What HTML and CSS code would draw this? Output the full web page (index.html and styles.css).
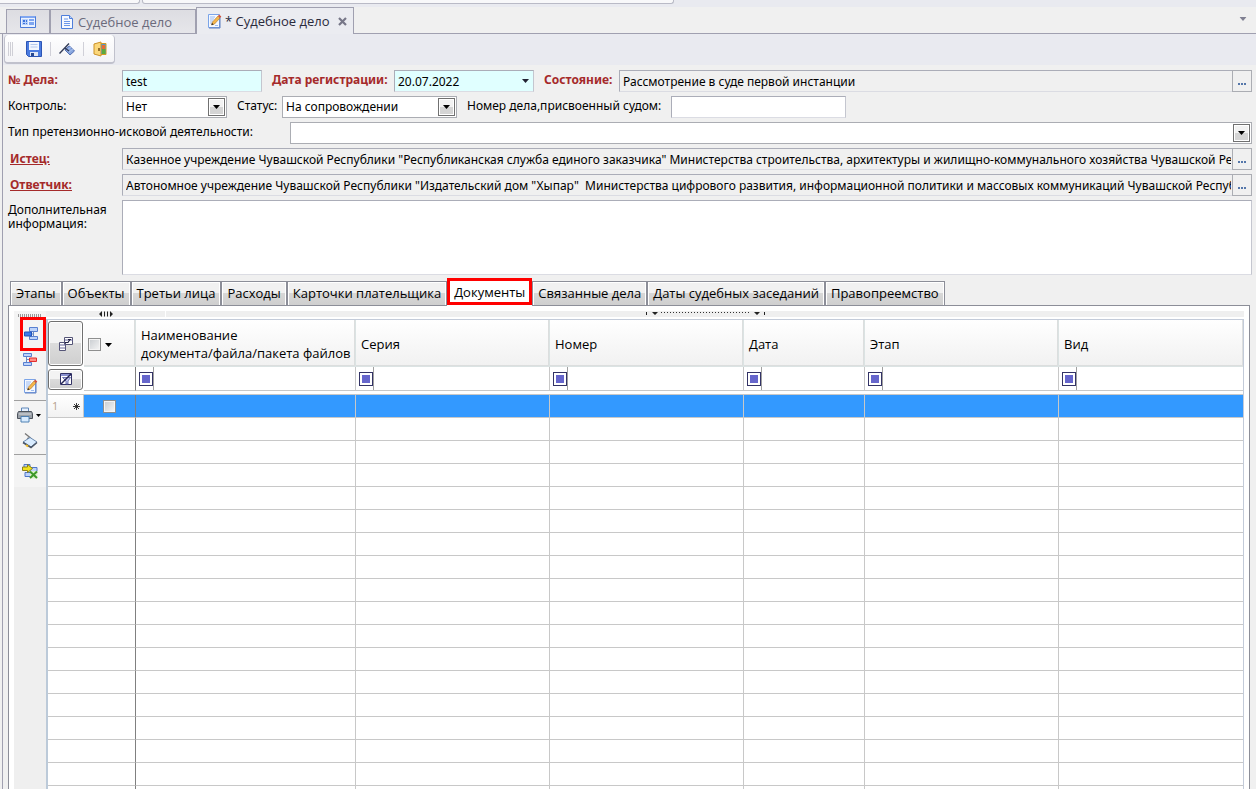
FILE: index.html
```html
<!DOCTYPE html>
<html lang="ru">
<head>
<meta charset="utf-8">
<title>Судебное дело</title>
<link rel="stylesheet" href="styles.css">
</head>
<body>
<svg class="defs" aria-hidden="true">
  <symbol id="dots" viewBox="0 0 8 2"><path d="M0 0h2v2H0zM3 0h2v2H3zM6 0h2v2H6z" fill="#5577aa"/></symbol>
  <symbol id="down" viewBox="0 0 7 4"><path d="M0 0h7L3.5 4z" fill="currentColor"/></symbol>
  <symbol id="edit" viewBox="0 0 16 16">
    <path d="M2.500 1.500h11v13h-11z" fill="#f4f8ff" stroke="#7ba4e8"/>
    <path d="M14 3v12H3" fill="none" stroke="#5f7fc0"/>
    <path d="M4 4h5M4 6h4M4 8h3M4 10h2M9 12.500h3" stroke="#9dbcf0"/>
    <path d="M5.500 12l1-3 5.500-6 2 2-5.500 6z" fill="#f6b64a" stroke="#a8742c" stroke-width=".6"/>
    <path d="M12 3l1-1.500 2.300 2L14 5z" fill="#d5543d"/><path d="M5.500 12l.5-2 1.700 1.400z" fill="#222"/>
  </symbol>
</svg>
<div class="app">
  <div class="topbars"><div class="topbar topbar-a"></div><div class="topbar topbar-b"></div></div>

  <div class="doctabs">
    <button class="doctab home" aria-label="Главная">
      <svg width="16" height="14" viewBox="0 0 16 14"><path d="M.5 1.500h15v11H.5z" fill="#eaf2ff" stroke="#4a7ad8"/><path d="M1 1h14v2H1z" fill="#7fa6f0"/><path d="M2 4h6v6H2z" fill="#b6d0fb"/><path d="M3 5h2v2H3zM6 5h1v2H6zM3 8h2v1H3zM6 8h1v1H6z" fill="#3d72da"/><path d="M9 4h5v2H9zM9 7h5v3H9z" fill="#7fa6f0"/></svg>
    </button>
    <button class="doctab second">
      <svg width="16" height="16" viewBox="0 0 16 16"><path d="M2.500 1.500h8l3 3v10h-11z" fill="#f6f9ff" stroke="#4f7fdb"/><path d="M10.500 1.500v3h3" fill="#bcd2fa" stroke="#4f7fdb"/><path d="M5 5h4M5 7.500h6M5 9.500h6M5 11.500h6" stroke="#6d98ea"/></svg>
      <span>Судебное дело</span>
    </button>
    <div class="doctab active">
      <svg width="16" height="16"><use href="#edit"/></svg>
      <span>* Судебное дело</span>
      <button class="close" aria-label="Закрыть"><svg width="9" height="9" viewBox="0 0 9 9"><path d="M1 1l7 7M8 1L1 8" stroke="#777788" stroke-width="2.200"/></svg></button>
    </div>
    <button class="tabmenu" aria-label="Список вкладок"><svg width="8" height="4" viewBox="0 0 7 4"><use href="#down"/></svg></button>
  </div>

  <main class="window">
    <div class="toolrow">
      <div class="toolbar">
        <i class="grip"></i>
        <button aria-label="Сохранить"><svg width="16" height="16" viewBox="0 0 16 16"><path d="M.5.5h15v15H2.500l-2-2z" fill="#4a7be0" stroke="#2c55b4"/><path d="M3 1h10v8H3z" fill="#f3f7ff"/><path d="M4.500 3.500h7M4.500 6h7" stroke="#b4c8ee"/><path d="M4 11h8v4H4z" fill="#dfe7f6"/><path d="M5 12h3v3H5z" fill="#27488f"/></svg></button>
        <i class="sep"></i>
        <button aria-label="Закрепить"><svg width="16" height="16" viewBox="0 0 16 16"><path d="M8 6.500l2.500-1.500 5 5-4.500 4-5-5z" fill="#86a5de" stroke="#4a67ab" stroke-width=".9"/><path d="M8 9l4-3M10 11l4-3" stroke="#b5caf2" stroke-width=".8"/><path d="M.5 12.500L10 2.500M6 7l4 3" stroke="#333c58" stroke-width="1.400"/></svg></button>
        <i class="sep"></i>
        <button aria-label="Выход"><svg width="16" height="16" viewBox="0 0 16 16"><path d="M6 2.500h8v11H6z" fill="#4a9bd0" stroke="#d69a22"/><path d="M10 8h3.500v5H10z" fill="#5bab3d"/><path d="M10 4h3v4h-3z" fill="#e76b35"/><path d="M2 3l7-2v14l-7-2z" fill="#fbd77a" stroke="#cb9127"/><path d="M7 7v3" stroke="#755015" stroke-width="1.500"/></svg></button>
      </div>
    </div>

    <form class="form" onsubmit="return false">
      <div class="row">
        <label class="req lab" for="num">№ Дела:</label>
        <input class="field cyan num" id="num" value="test">
        <label class="req date-lab" for="date">Дата регистрации:</label>
        <span class="combo date"><input class="field cyan" id="date" value="20.07.2022"><svg class="caret" width="7" height="4"><use href="#down"/></svg></span>
        <label class="req state-lab" for="state">Состояние:</label>
        <span class="lookup"><input class="field gray" id="state" readonly value="Рассмотрение в суде первой инстанции"><button class="more" aria-label="Выбрать состояние"><svg width="8" height="2"><use href="#dots"/></svg></button></span>
      </div>
      <div class="row">
        <label class="lab" for="ctl">Контроль:</label>
        <span class="combo ctl"><select class="field" id="ctl"><option>Нет</option></select><i class="drop"><svg width="7" height="4"><use href="#down"/></svg></i></span>
        <label class="status-lab" for="status">Статус:</label>
        <span class="combo status"><select class="field" id="status"><option>На сопровождении</option></select><i class="drop"><svg width="7" height="4"><use href="#down"/></svg></i></span>
        <label class="court-lab" for="court">Номер дела,присвоенный судом:</label>
        <input class="field court" id="court">
      </div>
      <div class="row">
        <label class="type-lab" for="type">Тип претензионно-исковой деятельности:</label>
        <span class="combo type"><select class="field" id="type"><option></option></select><i class="drop"><svg width="7" height="4"><use href="#down"/></svg></i></span>
      </div>
      <div class="row">
        <span class="lab link"><a class="req" href="#plaintiff">Истец:</a></span>
        <span class="lookup"><input class="field gray" id="plaintiff" aria-label="Истец" readonly value='Казенное учреждение Чувашской Республики "Республиканская служба единого заказчика" Министерства строительства, архитектуры и жилищно-коммунального хозяйства Чувашской Республики'><button class="more" aria-label="Выбрать истца"><svg width="8" height="2"><use href="#dots"/></svg></button></span>
      </div>
      <div class="row">
        <span class="lab link"><a class="req" href="#defendant">Ответчик:</a></span>
        <span class="lookup"><input class="field gray" id="defendant" aria-label="Ответчик" readonly value='Автономное учреждение Чувашской Республики "Издательский дом "Хыпар"  Министерства цифрового развития, информационной политики и массовых коммуникаций Чувашской Республики'><button class="more" aria-label="Выбрать ответчика"><svg width="8" height="2"><use href="#dots"/></svg></button></span>
      </div>
      <div class="row info">
        <label class="lab" for="info">Дополнительная информация:</label>
        <textarea class="field" id="info"></textarea>
      </div>
    </form>

    <div class="tabs">
      <button>Этапы</button><button>Объекты</button><button>Третьи лица</button><button>Расходы</button><button>Карточки плательщика</button><button class="current">Документы</button><button>Связанные дела</button><button>Даты судебных заседаний</button><button>Правопреемство</button>
    </div>

    <section class="panel">
      <div class="side">
        <i class="dotgrip"></i>
        <button class="marked" aria-label="Добавить"><svg width="16" height="16" viewBox="0 0 16 16"><path d="M6.500 1.500h8v4h-8zM6.500 10.500h8v3h-8z" fill="#bdd3fb" stroke="#587fd0"/><path d="M10.500 5.500v5M9 8h2" stroke="#6889c5"/><path d="M1.500 6h7v4h-7z" fill="#3b7bea" stroke="#2453b5"/></svg></button>
        <button aria-label="Удалить"><svg width="16" height="16" viewBox="0 0 16 16"><path d="M1.500 1.500h8v3h-8zM1.500 10.500h8v3h-8z" fill="#bdd3fb" stroke="#587fd0"/><path d="M4.500 5v5M4.500 7.500H8" stroke="#6889c5"/><path d="M7.500 6h7v3.500h-7z" fill="#ff8c86" stroke="#e12e2e"/></svg></button>
        <button aria-label="Изменить"><svg width="16" height="16"><use href="#edit"/></svg></button>
        <hr>
        <button class="print" aria-label="Печать"><svg width="16" height="16" viewBox="0 0 16 16"><path d="M4.500 1h7v5h-7z" fill="#e7f1ff" stroke="#5f87b8"/><path d="M1.500 4.500h13l1 2v5H.5v-5z" fill="#9aa0a7" stroke="#4e555e"/><path d="M2 7h12" stroke="#d9dde2"/><path d="M4 9.500h8v5.500H4z" fill="#d7ebff" stroke="#4e80b2"/></svg><svg class="mini" width="5" height="3" viewBox="0 0 7 4"><use href="#down"/></svg></button>
        <button aria-label="Просмотр"><svg width="16" height="16" viewBox="0 0 16 16"><path d="M3 .5l5 4-3 1" fill="none" stroke="#777" stroke-width="1.300"/><path d="M1 9l7-4.500L15 9l-6 5z" fill="#d9ecff" stroke="#6a88ae"/><path d="M1 9.500l8 5 6-5" fill="none" stroke="#4c5768" stroke-width="1.600"/><path d="M4 12l2 1.500" stroke="#f2bc28" stroke-width="2"/></svg></button>
        <hr>
        <button aria-label="Экспорт"><svg width="16" height="16" viewBox="0 0 16 16"><path d="M2 1.500h6v4H2zM3 9.500h6v4H3zM8 4.500h7v4H8z" fill="#bcd2fb" stroke="#4e76c8"/><path d="M.5 4h5V1.500l5 4-5 4V7.500h-5z" fill="#f1e21c" stroke="#82780e" stroke-width=".9"/><path d="M8 8h7.500v7.500H8z" fill="#dbf0cc"/><path d="M8 8.500l7 6.500M15 8.500l-7 6.500" stroke="#3b9828" stroke-width="2"/></svg></button>
      </div>
      <div class="gridarea">
        <div class="splitter">
          <div class="splitter-left"><svg width="14" height="6" viewBox="0 0 14 6"><path d="M3 0v6L0 3zM11 0v6l3-3zM5 .5h1v5H5zM8 .5h1v5H8z" fill="#222"/></svg></div>
          <div class="splitter-right"><svg width="119" height="4" viewBox="0 0 119 4"><path d="M.5 0v3M118.500 0v3" stroke="#222"/><path d="M6 0h6L9 3zM108 0h6l-3 3z" fill="#222"/><path d="M15 .5h90" stroke="#333" stroke-dasharray="1 2"/></svg></div>
        </div>
        <table class="grid">
          <colgroup><col class="c-head"><col class="c-check"><col class="c-name"><col class="c-wide"><col class="c-wide"><col class="c-date"><col class="c-wide"><col></colgroup>
          <thead>
            <tr class="titles">
              <th class="cell-btn"><button aria-label="Группировка"><svg width="16" height="16" viewBox="0 0 16 16"><path d="M6.500 1.500h8v7h-8zM1.500 6.500h6v8h-6z" fill="#fff" stroke="#555577"/><path d="M7 4h8M1.500 9h6M1.500 12h6" fill="none" stroke="#666699"/><path d="M7 6.500h3l2-3M10 3.500h3" fill="none" stroke="#222244" stroke-width="1.200"/></svg></button></th>
              <th class="checks"><input type="checkbox" aria-label="Выбрать все"><svg width="7" height="4"><use href="#down"/></svg></th>
              <th>Наименование<br>документа/файла/пакета файлов</th><th>Серия</th><th>Номер</th><th>Дата</th><th>Этап</th><th>Вид</th>
            </tr>
            <tr class="filters">
              <td class="cell-btn"><button aria-label="Фильтр"><svg width="12" height="12" viewBox="0 0 12 12"><path d="M.5.5h11v11H.5z" fill="#fff" stroke="#333366"/><path d="M1 1h10v2H1z" fill="#8890d0"/><path d="M2.500 4.500h8L8 8v3H6V8z" fill="#c4c8ee" stroke="#5058a0" stroke-width=".8"/><path d="M1 11L11 1" stroke="#222255" stroke-width="1.500"/></svg></button></td>
              <td></td>
              <td><button class="op" aria-label="Условие"></button></td><td><button class="op" aria-label="Условие"></button></td><td><button class="op" aria-label="Условие"></button></td><td><button class="op" aria-label="Условие"></button></td><td><button class="op" aria-label="Условие"></button></td><td><button class="op" aria-label="Условие"></button></td>
            </tr>
            <tr class="gap"><td colspan="8"></td></tr>
          </thead>
          <tbody>
            <tr class="selected"><th><div class="rowhead"><span>1</span><svg width="7" height="7" viewBox="0 0 7 7"><path d="M3.500 0v7M0 3.500h7M1 1l5 5M6 1L1 6" stroke="#222" stroke-width=".9"/></svg></div></th><td class="mid"><input type="checkbox" aria-label="Выбрать строку"></td><td></td><td></td><td></td><td></td><td></td><td></td></tr>
            <tr><td colspan="2"></td><td></td><td></td><td></td><td></td><td></td><td></td></tr>
            <tr><td colspan="2"></td><td></td><td></td><td></td><td></td><td></td><td></td></tr>
            <tr><td colspan="2"></td><td></td><td></td><td></td><td></td><td></td><td></td></tr>
            <tr><td colspan="2"></td><td></td><td></td><td></td><td></td><td></td><td></td></tr>
            <tr><td colspan="2"></td><td></td><td></td><td></td><td></td><td></td><td></td></tr>
            <tr><td colspan="2"></td><td></td><td></td><td></td><td></td><td></td><td></td></tr>
            <tr><td colspan="2"></td><td></td><td></td><td></td><td></td><td></td><td></td></tr>
            <tr><td colspan="2"></td><td></td><td></td><td></td><td></td><td></td><td></td></tr>
            <tr><td colspan="2"></td><td></td><td></td><td></td><td></td><td></td><td></td></tr>
            <tr><td colspan="2"></td><td></td><td></td><td></td><td></td><td></td><td></td></tr>
            <tr><td colspan="2"></td><td></td><td></td><td></td><td></td><td></td><td></td></tr>
            <tr><td colspan="2"></td><td></td><td></td><td></td><td></td><td></td><td></td></tr>
            <tr><td colspan="2"></td><td></td><td></td><td></td><td></td><td></td><td></td></tr>
            <tr><td colspan="2"></td><td></td><td></td><td></td><td></td><td></td><td></td></tr>
            <tr><td colspan="2"></td><td></td><td></td><td></td><td></td><td></td><td></td></tr>
            <tr><td colspan="2"></td><td></td><td></td><td></td><td></td><td></td><td></td></tr>
            <tr><td colspan="2"></td><td></td><td></td><td></td><td></td><td></td><td></td></tr>
          </tbody>
        </table>
      </div>
    </section>
  </main>
</div>
</body>
</html>
```
FILE: styles.css
```css
* { box-sizing: border-box; }
body { margin: 0; background: #f0f0f0; color: #000; font: 12px/14px "Noto Sans", "Open Sans", sans-serif; }
button, input, select, textarea { font: inherit; color: inherit; margin: 0; }
button { background: none; border: 0; padding: 0; }
svg { display: block; flex: none; }
.defs { position: absolute; width: 0; height: 0; }
.app { height: 100vh; overflow: hidden; display: flex; flex-direction: column; }

.topbars { display: flex; gap: 2px; height: 7px; background: #e9eaf0; padding-bottom: 3px; flex: none; }
.topbar { background: #f8f8fa; border: solid #b9bac6; border-width: 0 1px 1px 0; border-radius: 0 0 3px 0; }
.topbar-a { width: 140px; }
.topbar-b { width: 532px; border-left-width: 1px; border-radius: 0 0 3px 3px; }

.doctabs { display: flex; align-items: flex-end; height: 27px; padding-left: 6px; border-bottom: 1px solid #a0a0b0; flex: none; font-family: "Open Sans", "Noto Sans", sans-serif; font-size: 13px; line-height: 16px; }
.doctab { display: flex; align-items: center; height: 24px; border: 1px solid #a0a0b0; border-bottom: 0; background: linear-gradient(#dddde2, #e6e6ea); color: #6b6b7c; }
.home { width: 44px; justify-content: center; }
.second { width: 146px; padding-left: 8px; gap: 3px; }
.active { height: 27px; margin-bottom: -1px; width: 158px; background: #ebecf1; color: #2a2a3c; padding: 0 6px 0 9px; gap: 3px; }
.close { margin-left: auto; }
.tabmenu { margin: 0 9px 12px auto; color: #808092; }

.window { flex: 1; min-height: 0; margin-left: 2px; border-left: 1px solid #a0a0b0; display: flex; flex-direction: column; }
.toolrow { background: #e9eaf0; height: 31px; padding: 1px; flex: none; }
.toolbar { display: inline-flex; align-items: center; gap: 8px; height: 29px; padding: 0 6px 0 3px; background: linear-gradient(#fff, #f3f3f6); border: solid #c0c1cc; border-width: 0 1px 2px 1px; border-radius: 4px; }
.grip { width: 6px; height: 14px; margin-right: 4px; background: repeating-linear-gradient(90deg, #cfcfd6 0 1px, transparent 1px 2px); }
.sep { width: 1px; height: 14px; background: #d0d0d8; }

.form { display: flex; flex-direction: column; gap: 4px; padding: 5px 4px 0 5px; flex: none; }
.row { display: flex; align-items: flex-start; min-height: 22px; }
.row label, .link { padding-top: 3px; flex: none; }
.lab { width: 114px; }
.req { color: #a52a2a; font-weight: bold; }
.row .link { padding: 4px 0 0 2px; }
.field { height: 22px; padding: 0 3px; border: 1px solid #abadb8; border-right-color: #c4c6cf; border-bottom-color: #dbdce3; border-radius: 0; background: #fff; outline: 0; appearance: none; width: 100%; }
.cyan { background: #e0ffff; }
.gray { background: #f0f0f0; }
select.field { border-color: #abadb3; }
.row .num { width: 140px; }
.combo { position: relative; flex: none; }
.date-lab { width: 132px; padding-left: 10px; }
.date { width: 140px; }
.caret { position: absolute; right: 5px; top: 9px; color: #222233; }
.state-lab { width: 85px; padding-left: 10px; }
.lookup { flex: 1; min-width: 0; display: flex; }
.lookup .field { min-width: 0; border-right: 0; padding-right: 1px; }
.more { width: 20px; height: 22px; border: 1px solid #abadb3; display: flex; justify-content: center; align-items: center; padding-top: 5px; flex: none; }
.ctl { width: 105px; }
.status-lab { width: 55px; padding-left: 10px; }
.status { width: 175px; }
.court-lab { width: 214px; padding-left: 10px; }
.row .court { width: 175px; }
.type-lab { width: 282px; }
.row .type { flex: 1; }
.drop { position: absolute; right: 2px; top: 2px; width: 17px; height: 18px; border: 1px solid #707070; box-shadow: inset 0 0 0 1px #fff; background: linear-gradient(#f2f2f2 50%, #d4d4d4 50%); display: flex; align-items: center; justify-content: center; pointer-events: none; }
.row textarea { height: 75px; resize: none; flex: 1; }
.info .lab { padding-right: 10px; }

.tabs { display: flex; align-items: flex-end; padding: 4px 0 0 7px; font-family: "Open Sans", "Noto Sans", sans-serif; font-size: 13px; line-height: 16px; flex: none; height: 31px; position: relative; }
.tabs button { height: 25px; padding: 0 5px 1px; border: 1px solid #8c8e98; box-shadow: inset 1px 1px #fff, inset -1px 0 #fff; background: linear-gradient(#f1f1f1 48%, #d7d7d7 50%, #cfcfcf); white-space: nowrap; }
.tabs .current { height: 27px; background: #fff; border: 3px solid #f00; box-shadow: 0 2px #fff; padding: 0 4px; margin-bottom: 1px; }

.panel { flex: 1; min-height: 0; margin: -1px 6px 0 5px; border: 1px solid #8c8e98; border-bottom: 0; background: #fff; padding: 5px 5px 0; display: flex; overflow: hidden; }
.side { width: 32px; background: linear-gradient(#f4f4f4 176px, #efefef 176px); display: flex; flex-direction: column; align-items: center; flex: none; }
.dotgrip { width: 24px; height: 3px; margin-top: 3px; flex: none; background: repeating-linear-gradient(90deg, #999 0 1px, transparent 1px 2px); }
.side button { width: 32px; height: 26px; display: flex; align-items: center; justify-content: center; gap: 3px; flex: none; }
.side .marked { width: 26px; height: 34px; border: 3px solid #f00; align-self: flex-end; padding-right: 4px; margin-bottom: -4px; }
.side hr { width: 100%; border: 0; border-top: 1px solid #a0a0a0; margin: 1px 0; flex: none; }
.side hr:last-of-type { margin: 0 0 3px; }
.side .print { padding-right: 3px; }
.gridarea { flex: 1; min-width: 0; }
.splitter { display: flex; height: 6px; margin-bottom: 2px; background: #efefef; }
.splitter-left { width: 120px; display: flex; justify-content: center; align-items: center; border-right: 1px solid #fff; }
.splitter-right { flex: 1; display: flex; justify-content: center; align-items: center; }

.grid { width: 100%; table-layout: fixed; border-collapse: separate; border-spacing: 0; border: 1px solid #c3cbd9; border-left: 2px solid #bccad9; border-bottom: 0; font-family: "Open Sans", "Noto Sans", sans-serif; font-size: 13px; line-height: 18px; }
.c-head { width: 36px; }
.c-check { width: 52px; }
.c-name { width: 220px; }
.c-wide { width: 194px; }
.c-date { width: 121px; }
.grid th, .grid td { padding: 0; height: 23px; border: solid #c8c8c8; border-width: 0 1px 1px 0; text-align: left; font-weight: normal; }
.grid th:last-child, .grid td:last-child { border-right: 0; }
.grid .titles th { height: 47px; padding: 1px 5px 0; border-color: #dbe3e3; background: linear-gradient(#fff, #f1f1f1); box-shadow: inset -1px -1px #dcdede; white-space: nowrap; }
.grid tr .cell-btn, .grid .titles .cell-btn { padding: 1px 1px 1px 0; border: 0; background: #fff; box-shadow: none; }
.cell-btn button { display: flex; align-items: center; justify-content: center; width: 35px; height: 45px; border: 1px solid #707070; border-radius: 3px; box-shadow: inset 0 0 0 1px #fff; background: linear-gradient(#f3f3f3 48%, #dcdcdc 50%, #cfcfcf); }
.filters .cell-btn button { height: 21px; }
.grid .titles .checks { padding: 0 4px; }
.checks > * { display: inline-block; vertical-align: middle; }
.checks svg { margin-left: 4px; }
input[type="checkbox"] { appearance: none; width: 13px; height: 13px; border: 1px solid #8e8f8f; background: linear-gradient(135deg, #c8ccd0, #f6f6f6); box-shadow: inset 0 0 0 1px #f4f4f4; vertical-align: middle; }
.grid .filters td { height: 24px; }
.op { display: flex; width: 18px; height: 23px; padding-left: 2px; align-items: center; justify-content: flex-start; border-right: 1px solid #a0a0a0; }
.op::before { content: ""; width: 12px; height: 12px; margin-left: 1px; border: 1px solid #333366; background: #6666cc; box-shadow: inset 0 0 0 2px #fff; }
.grid .gap td { height: 4px; }
.grid .selected td { background: #3399ff; }
.grid .selected .mid { text-align: center; }
.selected input { display: block; margin: 0 auto; }
.grid tbody td:nth-last-child(7), .grid .filters td:nth-child(2) { border-right-color: #808080; }
.grid tbody th { background: linear-gradient(#fff, #f2f2f2); }
.rowhead { display: flex; align-items: center; justify-content: space-between; padding: 0 3px 0 4px; font-size: 11px; line-height: 18px; color: #b5a08a; }
```
